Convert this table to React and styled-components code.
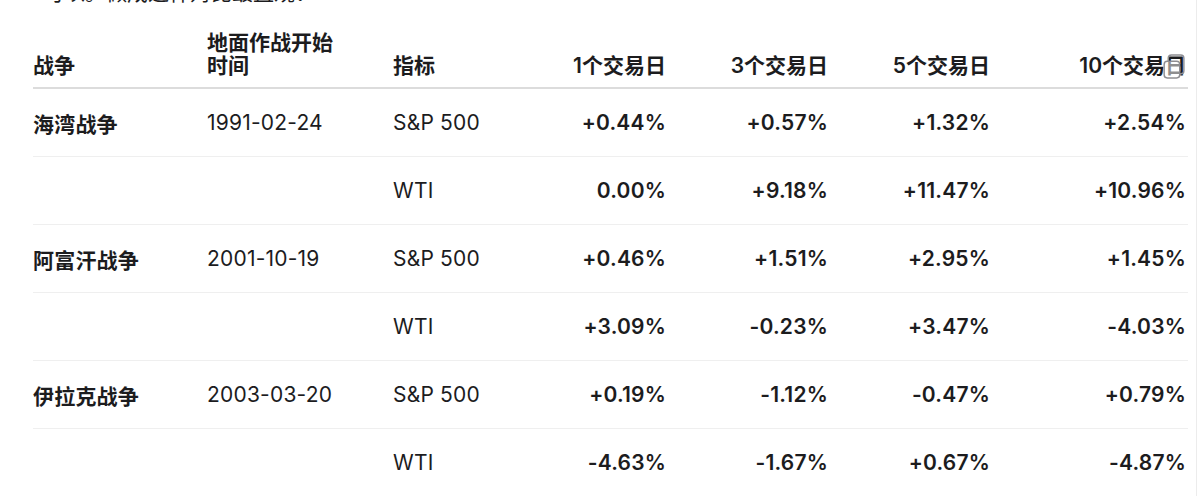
import React from "react";
import styled, { createGlobalStyle } from "styled-components";

const Global = createGlobalStyle`
  html, body { margin: 0; padding: 0; background: #fff; }
  body {
    font-family: "Inter", "Noto Sans CJK SC", "Noto Sans", sans-serif;
    color: #1c1c1e;
    overflow: hidden;
  }
`;

const Frame = styled.div`
  width: 1197px;
  height: 496px;
  border-right: 1px solid #ececec;
  box-sizing: border-box;
  padding: 0 9px 0 33px;
  overflow: hidden;
`;

const Lead = styled.p`
  margin: -21px 0 0 0;
  font-size: 21px;
  line-height: 28px;
  padding-left: 10px;
  color: #1c1c1e;
`;

const Table = styled.div`
  display: grid;
  grid-template-columns: 174px 186px 113px 162px 162px 162px 196px;
  width: 1155px;
`;

const HeadCell = styled.div`
  position: relative;
  display: flex;
  align-items: flex-end;
  justify-content: ${(p) => (p.$right ? "flex-end" : "flex-start")};
  text-align: ${(p) => (p.$right ? "right" : "left")};
  height: 70px;
  padding-bottom: 10px;
  padding-right: ${(p) => (p.$right ? "2px" : "0")};
  font-size: 21px;
  line-height: 23px;
  font-weight: 600;
  border-bottom: 2px solid #dcdcdc;
`;

const Cell = styled.div`
  display: flex;
  align-items: center;
  justify-content: ${(p) => (p.$right ? "flex-end" : "flex-start")};
  height: 67px;
  padding-right: ${(p) => (p.$right ? "2px" : "0")};
  font-size: 21px;
  font-weight: ${(p) => (p.$bold ? 600 : 400)};
  letter-spacing: 0.2px;
  border-bottom: ${(p) => (p.$last ? "none" : "1px solid #efefef")};
`;

const CopyBadge = styled.span`
  position: absolute;
  right: 1px;
  top: 46px;
  width: 27px;
  height: 27px;
  color: #8e8e93;
  display: flex;
`;

const CopyIcon = () => (
  <svg width="27" height="27" viewBox="0 0 26 26" fill="none" stroke="currentColor" strokeWidth="1.4">
    <rect x="4" y="8" width="15" height="16" rx="3" fill="rgba(255,255,255,0.5)" />
    <path d="M8 8V5a3 3 0 0 1 3-3h9a3 3 0 0 1 3 3v12a3 3 0 0 1-3 3h-1" />
  </svg>
);

const headers = ["1个交易日", "3个交易日", "5个交易日", "10个交易日"];

const rows = [
  { war: "海湾战争", date: "1991-02-24", idx: "S&P 500", v: ["+0.44%", "+0.57%", "+1.32%", "+2.54%"] },
  { war: "", date: "", idx: "WTI", v: ["0.00%", "+9.18%", "+11.47%", "+10.96%"] },
  { war: "阿富汗战争", date: "2001-10-19", idx: "S&P 500", v: ["+0.46%", "+1.51%", "+2.95%", "+1.45%"] },
  { war: "", date: "", idx: "WTI", v: ["+3.09%", "-0.23%", "+3.47%", "-4.03%"] },
  { war: "伊拉克战争", date: "2003-03-20", idx: "S&P 500", v: ["+0.19%", "-1.12%", "-0.47%", "+0.79%"] },
  { war: "", date: "", idx: "WTI", v: ["-4.63%", "-1.67%", "+0.67%", "-4.87%"] },
];

export default function App() {
  return (
    <>
      <Global />
      <Frame>
        <Lead>可以。做成这样对比最直观：</Lead>
        <Table>
          <HeadCell>战争</HeadCell>
          <HeadCell>地面作战开始<br />时间</HeadCell>
          <HeadCell>指标</HeadCell>
          {headers.map((h, i) => (
            <HeadCell key={h} $right>
              {h}
              {i === headers.length - 1 && (
                <CopyBadge>
                  <CopyIcon />
                </CopyBadge>
              )}
            </HeadCell>
          ))}
          {rows.map((r, ri) => {
            const last = ri === rows.length - 1;
            return (
              <React.Fragment key={ri}>
                <Cell $bold $last={last}>{r.war}</Cell>
                <Cell $last={last}>{r.date}</Cell>
                <Cell $last={last}>{r.idx}</Cell>
                {r.v.map((x, i) => (
                  <Cell key={i} $right $bold $last={last}>{x}</Cell>
                ))}
              </React.Fragment>
            );
          })}
        </Table>
      </Frame>
    </>
  );
}
